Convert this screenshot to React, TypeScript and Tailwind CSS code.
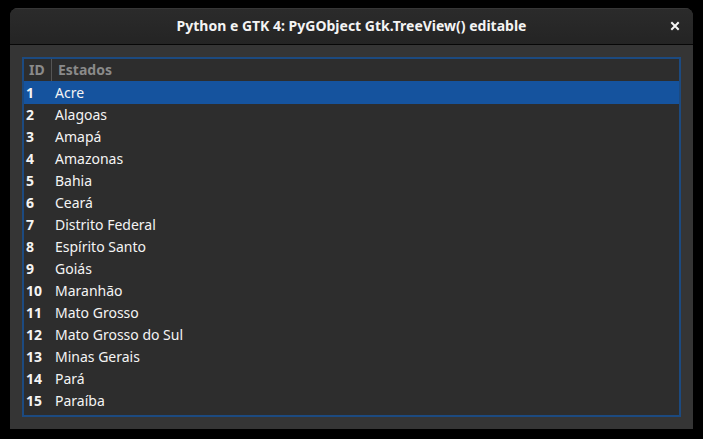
const states = [
  "Acre",
  "Alagoas",
  "Amapá",
  "Amazonas",
  "Bahia",
  "Ceará",
  "Distrito Federal",
  "Espírito Santo",
  "Goiás",
  "Maranhão",
  "Mato Grosso",
  "Mato Grosso do Sul",
  "Minas Gerais",
  "Pará",
  "Paraíba",
];

export default function App() {
  return (
    <main className="flex min-h-screen flex-col bg-black px-[10px] pt-2 pb-[10px] font-['Noto_Sans',sans-serif] text-sm text-[#f4f4f4]">
      <section className="flex flex-1 flex-col overflow-hidden rounded-t-lg bg-[#353535]">
        <header className="grid h-[37px] grid-cols-[1fr_auto_1fr] items-center border-b border-[#070707] bg-linear-to-b from-[#2b2b2b] to-[#242424] px-3 inset-shadow-[0_1px_#363636]">
          <h1 className="col-start-2 text-sm font-bold">
            Python e GTK 4: PyGObject Gtk.TreeView() editable
          </h1>
          <button
            type="button"
            aria-label="Fechar"
            className="flex size-3 items-center justify-center justify-self-end"
          >
            <svg
              viewBox="0 0 10 10"
              className="size-[10px]"
              stroke="currentColor"
              strokeWidth="2"
              aria-hidden="true"
            >
              <path d="M1.3 1.3l7.4 7.4M8.7 1.3L1.3 8.7" />
            </svg>
          </button>
        </header>
        <div className="flex flex-1 flex-col p-3">
          <div className="flex-1 border-2 border-[#1c4a80] bg-[#2d2d2d]">
            <table className="w-full border-separate border-spacing-0 text-left leading-[22px]">
              <thead className="text-[#8a8a8a]">
                <tr>
                  <th className="w-7 border-r border-[#555555] pl-[5px]">ID</th>
                  <th className="pl-[6px]">Estados</th>
                </tr>
              </thead>
              <tbody>
                {states.map((state, i) => (
                  <tr
                    key={state}
                    className={i === 0 ? "h-[23px] bg-[#15539e] align-bottom" : ""}
                  >
                    <td className="pl-[2px] font-bold">{i + 1}</td>
                    <td className="pl-[3px]">{state}</td>
                  </tr>
                ))}
              </tbody>
            </table>
          </div>
        </div>
      </section>
    </main>
  );
}
